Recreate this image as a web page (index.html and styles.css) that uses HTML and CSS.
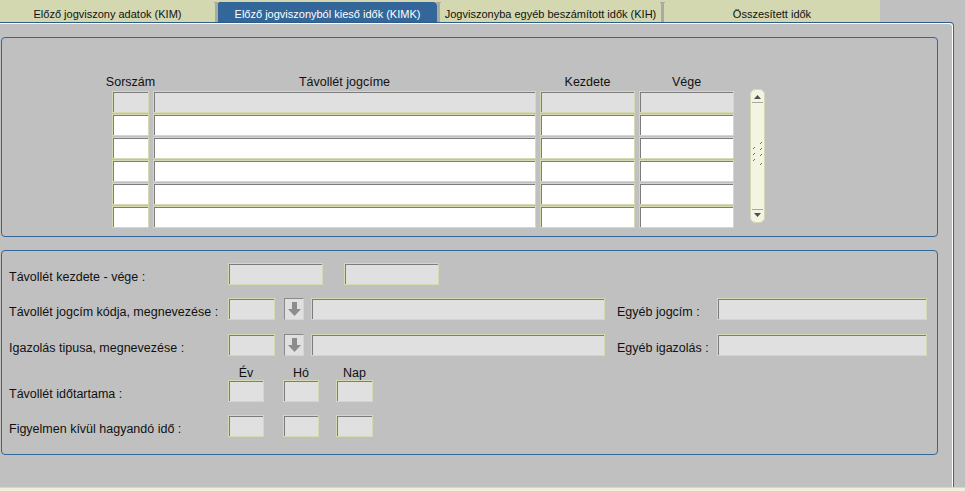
FILE: index.html
```html
<!DOCTYPE html>
<html>
<head>
<meta charset="utf-8">
<link rel="stylesheet" href="styles.css">
</head>
<body>
<div class="tabs">
  <div class="tab t1">Előző jogviszony adatok (KIM)</div>
  <div class="sep"></div>
  <div class="tab t2 active">Előző jogviszonyból kieső idők (KIMK)</div>
  <div class="sep"></div>
  <div class="tab t3">Jogviszonyba egyéb beszámított idők (KIH)</div>
  <div class="sep"></div>
  <div class="tab t4">Összesített idők</div>
</div>
<div class="frame">
  <div class="panel panel-list">
    <div class="grid">
      <div class="hd">Sorszám</div>
      <div class="hd">Távollét jogcíme</div>
      <div class="hd">Kezdete</div>
      <div class="hd">Vége</div>
      <div class="cell grey"></div><div class="cell grey"></div><div class="cell grey"></div><div class="cell grey"></div>
      <div class="cell"></div><div class="cell"></div><div class="cell"></div><div class="cell"></div>
      <div class="cell"></div><div class="cell"></div><div class="cell"></div><div class="cell"></div>
      <div class="cell"></div><div class="cell"></div><div class="cell"></div><div class="cell"></div>
      <div class="cell"></div><div class="cell"></div><div class="cell"></div><div class="cell"></div>
      <div class="cell"></div><div class="cell"></div><div class="cell"></div><div class="cell"></div>
    </div>
    <svg class="scroll" width="15" height="134" viewBox="0 0 15 134">
      <rect x="0.5" y="0.5" width="14" height="133" rx="5" ry="5" fill="#f4f4e2" stroke="#d4d6b8"/>
      <polygon points="4,10 11,10 7.5,6" fill="#505050"/>
      <line x1="2" y1="13.5" x2="13" y2="13.5" stroke="#a8a8a0"/>
      <line x1="2" y1="120.5" x2="13" y2="120.5" stroke="#a8a8a0"/>
      <polygon points="4,124 11,124 7.5,128" fill="#505050"/>
      <g stroke="#707068" stroke-width="1">
        <line x1="10" y1="55" x2="12" y2="53"/>
        <line x1="3" y1="60" x2="5" y2="58"/>
        <line x1="10" y1="61" x2="12" y2="59"/>
        <line x1="3" y1="66" x2="5" y2="64"/>
        <line x1="10" y1="67" x2="12" y2="65"/>
        <line x1="3" y1="72" x2="5" y2="70"/>
        <line x1="10" y1="76" x2="12" y2="74"/>
      </g>
    </svg>
  </div>
  <div class="panel panel-form">
    <div class="frow r1">
      <div class="lbl">Távollét kezdete - vége :</div>
      <div class="fld w95"></div>
      <div class="fld w95 ml21"></div>
    </div>
    <div class="frow r2">
      <div class="lbl">Távollét jogcím kódja, megnevezése :</div>
      <div class="fld w47"></div>
      <div class="btn"><svg width="18" height="20" viewBox="0 0 18 20"><polygon points="7,3 12,3 12,10 16,10 9.5,17 3,10 7,10" fill="#8c8c8c"/></svg></div>
      <div class="fld w294"></div>
      <div class="lbl2">Egyéb jogcím :</div>
      <div class="fld w210"></div>
    </div>
    <div class="frow r3">
      <div class="lbl">Igazolás tipusa, megnevezése :</div>
      <div class="fld w47"></div>
      <div class="btn"><svg width="18" height="20" viewBox="0 0 18 20"><polygon points="7,3 12,3 12,10 16,10 9.5,17 3,10 7,10" fill="#8c8c8c"/></svg></div>
      <div class="fld w294"></div>
      <div class="lbl2">Egyéb igazolás :</div>
      <div class="fld w210"></div>
    </div>
    <div class="heads">
      <div class="h w36">Év</div>
      <div class="h w36 ml19">Hó</div>
      <div class="h w37 ml17">Nap</div>
    </div>
    <div class="frow">
      <div class="lbl">Távollét időtartama :</div>
      <div class="fld w36"></div>
      <div class="fld w36 ml19"></div>
      <div class="fld w37 ml17"></div>
    </div>
    <div class="frow r5">
      <div class="lbl">Figyelmen kívül hagyandó idő :</div>
      <div class="fld w36"></div>
      <div class="fld w36 ml19"></div>
      <div class="fld w37 ml17"></div>
    </div>
  </div>
</div>
<div class="footer"></div>
</body>
</html>
```
FILE: styles.css
```css
html, body {
  margin: 0;
  padding: 0;
}
body {
  width: 965px;
  height: 491px;
  overflow: hidden;
  background: #c0c0c0;
  font-family: "Liberation Sans", Arial, sans-serif;
  font-size: 12.5px;
  color: #111;
}
.tabs {
  display: flex;
  width: 880px;
  height: 22px;
  background: #d4d8b0;
}
.tab {
  height: 22px;
  box-sizing: border-box;
  padding-top: 7px;
  line-height: 14px;
  font-size: 11px;
  text-align: center;
  white-space: nowrap;
  color: #111;
}
.t1 { width: 215px; }
.t2 { width: 219px; }
.t3 { width: 221px; }
.t4 { width: 216px; }
.tab.active {
  height: 20px;
  margin-top: 2px;
  padding-top: 5px;
  background: #336699;
  color: #fff;
  border-top-right-radius: 4px;
}
.sep {
  position: relative;
  width: 3px;
  height: 20px;
  margin-top: 2px;
  background: #a9aaa4;
}
.sep::before {
  content: "";
  position: absolute;
  left: -1px;
  top: 0;
  width: 5px;
  height: 1px;
  background: #a9aaa4;
}
.frame {
  width: 954px;
  height: 465px;
  box-sizing: border-box;
  border-top: 1px solid #2c5c8c;
  border-right: 1px solid #336699;
  border-top-right-radius: 4px;
  box-shadow: inset -1px 1px 0 #ffffff;
  padding: 14px 0 0 1px;
}
.panel {
  width: 937px;
  box-sizing: border-box;
  border: 1px solid #336699;
  border-radius: 4px;
}
.panel-list {
  height: 200px;
  padding: 37px 0 0 110px;
  display: flex;
  align-items: flex-start;
}
.grid {
  display: grid;
  grid-template-columns: 37px 383px 95px 95px;
  grid-template-rows: 15px;
  grid-auto-rows: 22px;
  column-gap: 4px;
  row-gap: 1px;
}
.hd {
  display: flex;
  justify-content: center;
  white-space: nowrap;
  line-height: 15px;
  color: #111;
}
.cell, .fld {
  box-sizing: border-box;
  height: 22px;
  background: #ffffff;
  border: 1px solid #d6d9b2;
  box-shadow: inset 1px 1px 0 #7c7c7c;
}
.cell.grey { background: #e0e0e0; }
.scroll {
  display: block;
  margin: 14px 0 0 16px;
}
.panel-form {
  height: 205px;
  margin-top: 13px;
  padding: 12px 0 0 7px;
}
.frow {
  display: flex;
  align-items: flex-start;
  height: 22px;
}
.r2 { margin-top: 13px; }
.r3 { margin-top: 14px; }
.r5 { margin-top: 13px; }
.lbl {
  width: 219px;
  padding-top: 6px;
  line-height: 16px;
  white-space: nowrap;
}
.lbl2 {
  width: 100px;
  margin-left: 12px;
  padding-top: 6px;
  line-height: 16px;
  white-space: nowrap;
}
.fld { background: #e0e0e0; }
.w95 { width: 95px; }
.w47 { width: 47px; }
.w294 { width: 294px; margin-left: 7px; }
.w210 { width: 210px; }
.w36 { width: 36px; }
.w37 { width: 37px; }
.ml21 { margin-left: 21px; }
.ml19 { margin-left: 19px; }
.ml17 { margin-left: 17px; }
.btn {
  box-sizing: border-box;
  width: 20px;
  height: 22px;
  margin-left: 9px;
  background: #e0e0e0;
  border: 1px solid #d6d9b2;
  border-top-color: #8a8a8a;
  border-left-color: #8a8a8a;
  display: flex;
}
.btn svg { display: block; }
.heads {
  display: flex;
  margin-top: 10px;
  margin-left: 219px;
  height: 14px;
}
.h {
  text-align: center;
  line-height: 14px;
  white-space: nowrap;
}
.footer {
  height: 5px;
  background: #eff0dc;
  border-top: 1px solid #d6d9b2;
  box-sizing: border-box;
}
```
